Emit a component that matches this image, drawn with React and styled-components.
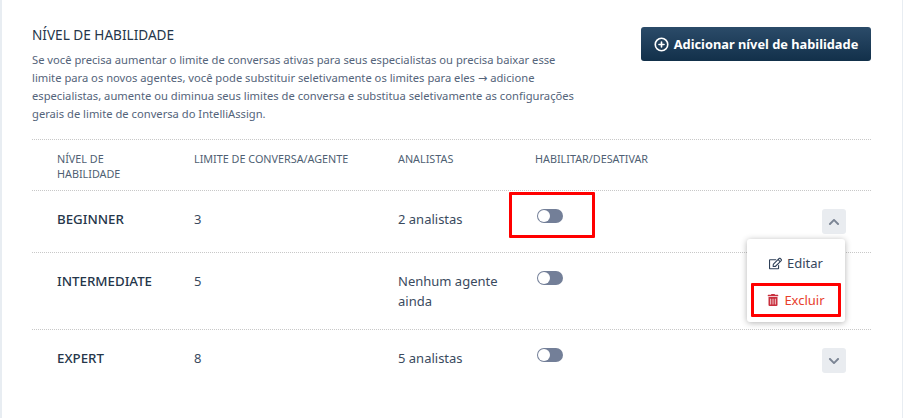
import React from 'react';
import styled, { createGlobalStyle } from 'styled-components';
import { FaChevronDown, FaChevronUp, FaRegEdit, FaTrashAlt } from 'react-icons/fa';
import { FiPlusCircle } from 'react-icons/fi';

const levels = [
	{ name: 'BEGINNER', limit: 3, agents: '2 analistas', open: true, marked: true },
	{ name: 'INTERMEDIATE', limit: 5, agents: 'Nenhum agente ainda' },
	{ name: 'EXPERT', limit: 8, agents: '5 analistas', arrow: true },
];

const GlobalStyle = createGlobalStyle`
	html, body {
		margin: 0;
		height: 100%;
		background: #e8edf2;
		overflow: hidden;
	}
`;

const Panel = styled.main`
	box-sizing: border-box;
	height: 418px;
	margin: 0 1px 0 2px;
	padding: 27px 31px 0 30px;
	background: #fff;
	font-family: 'Noto Sans', 'DejaVu Sans', sans-serif;
	color: #2f3f52;
`;

const Top = styled.header`
	display: flex;
	justify-content: space-between;
	align-items: flex-start;
	padding-bottom: 16px;
	border-bottom: 1px dotted #c8c8c8;
`;

const Intro = styled.div`
	width: 550px;
`;

const Title = styled.h2`
	margin: 0;
	font-size: 13.6px;
	line-height: 16px;
	font-weight: 400;
	color: #25364a;
`;

const Description = styled.p`
	margin: 8px 0 0;
	font-size: 11.2px;
	line-height: 18px;
	color: #54647a;
`;

const AddButton = styled.button`
	display: flex;
	align-items: center;
	justify-content: center;
	gap: 5px;
	width: 230px;
	height: 34px;
	padding: 0;
	border: 0;
	border-radius: 3px;
	background: linear-gradient(#2b4b69, #12304a);
	color: #fff;
	font-family: inherit;
	font-size: 12.8px;
	font-weight: 700;
`;

const columns = 'grid-template-columns: 137px 204px 137px 1fr 49px;';

const HeaderRow = styled.div`
	display: grid;
	${columns}
	box-sizing: border-box;
	height: 51px;
	padding: 11px 0 0 25px;
	border-bottom: 1px dotted #c8c8c8;
	font-size: 10.8px;
	line-height: 15px;
	color: #4f5f73;
`;

const HeaderCell = styled.div`
	padding-right: ${(p) => (p.$narrow ? '40px' : '10px')};
`;

const Row = styled.div`
	display: grid;
	${columns}
	padding: 18px 0 18px 25px;
	font-size: 13px;
	line-height: 20px;
	border-bottom: ${(p) => (p.$last ? '0' : '1px dotted #c8c8c8')};
`;

const Name = styled.div`
	font-size: 13.3px;
	font-weight: 500;
	color: #25364a;
`;

const Cell = styled.div`
	padding-right: 20px;
	color: #3a4a5e;
`;

const ToggleCell = styled.div`
	position: relative;
	padding-left: 2px;
`;

const Toggle = styled.span`
	display: block;
	position: relative;
	width: 26px;
	height: 14px;
	border-radius: 7px;
	background: #737f98;
	&::before {
		content: '';
		position: absolute;
		top: 1px;
		left: 1px;
		width: 12px;
		height: 12px;
		border-radius: 50%;
		background: #fff;
	}
`;

const ToggleMark = styled.span`
	position: absolute;
	top: -17px;
	left: -26px;
	width: 86px;
	height: 46px;
	box-sizing: border-box;
	border: 3px solid #f00;
	border-radius: 1px;
`;

const Actions = styled.div`
	position: relative;
	height: 25px;
`;

const ArrowButton = styled.button`
	display: flex;
	align-items: center;
	justify-content: center;
	width: 24px;
	height: 25px;
	padding: 0;
	border: 0;
	border-radius: 3px;
	background: #e9ecf0;
	color: #7b8594;
	font-size: 12px;
`;

const Menu = styled.div`
	position: absolute;
	top: 30px;
	left: -75px;
	z-index: 2;
	box-sizing: border-box;
	width: 98px;
	height: 83px;
	padding: 4px;
	background: #fff;
	border-radius: 3px;
	box-shadow: 0 1px 6px rgba(0, 0, 0, 0.3);
`;

const MenuItem = styled.div`
	display: flex;
	align-items: center;
	justify-content: center;
	gap: 5px;
	box-sizing: border-box;
	height: ${(p) => (p.$danger ? '34px' : '40px')};
	font-size: 13px;
	color: ${(p) => (p.$danger ? '#e8402c' : '#36465c')};
	border: ${(p) => (p.$danger ? '3px solid #f00' : '0')};
	border-radius: 1px;
	svg {
		color: ${(p) => (p.$danger ? '#c9303e' : '#2f4058')};
	}
`;

export default function App() {
	return (
		<>
			<GlobalStyle />
			<Panel>
				<Top>
					<Intro>
						<Title>NÍVEL DE HABILIDADE</Title>
						<Description>
							Se você precisa aumentar o limite de conversas ativas para seus especialistas ou precisa baixar esse
							limite para os novos agentes, você pode substituir seletivamente os limites para eles → adicione
							especialistas, aumente ou diminua seus limites de conversa e substitua seletivamente as configurações
							gerais de limite de conversa do IntelliAssign.
						</Description>
					</Intro>
					<AddButton>
						<FiPlusCircle size={15} strokeWidth={2.6} />
						Adicionar nível de habilidade
					</AddButton>
				</Top>
				<HeaderRow>
					<HeaderCell $narrow>NÍVEL DE HABILIDADE</HeaderCell>
					<HeaderCell>LIMITE DE CONVERSA/AGENTE</HeaderCell>
					<HeaderCell>ANALISTAS</HeaderCell>
					<HeaderCell>HABILITAR/DESATIVAR</HeaderCell>
				</HeaderRow>
				{levels.map((level, i) => (
					<Row key={level.name} $last={i === levels.length - 1}>
						<Name>{level.name}</Name>
						<Cell>{level.limit}</Cell>
						<Cell>{level.agents}</Cell>
						<ToggleCell>
							<Toggle />
							{level.marked && <ToggleMark />}
						</ToggleCell>
						<Actions>
							{level.open && (
								<ArrowButton>
									<FaChevronUp />
								</ArrowButton>
							)}
							{level.arrow && (
								<ArrowButton>
									<FaChevronDown />
								</ArrowButton>
							)}
							{level.open && (
								<Menu>
									<MenuItem>
										<FaRegEdit size={13} />
										Editar
									</MenuItem>
									<MenuItem $danger>
										<FaTrashAlt size={12} />
										Excluir
									</MenuItem>
								</Menu>
							)}
						</Actions>
					</Row>
				))}
			</Panel>
		</>
	);
}
